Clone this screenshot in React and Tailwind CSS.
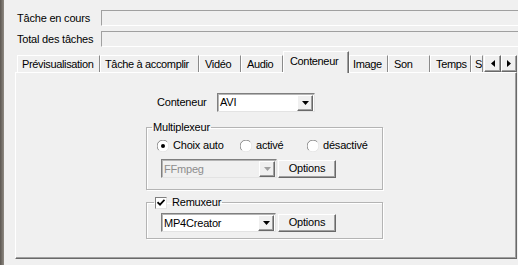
import React from "react";

const raised =
  "bg-[#f0f0f0] border border-t-white border-l-white border-r-[#696969] border-b-[#696969] shadow-[inset_-1px_-1px_0_#a0a0a0]";

function DownArrow({ color = "#000" }) {
  return (
    <svg width="7" height="4" viewBox="0 0 7 4">
      <path d="M0 0H7L3.5 4Z" fill={color} />
    </svg>
  );
}

function Select({ value, width, disabled }) {
  return (
    <div
      className={`flex h-[19px] border border-t-[#7f7f7f] border-l-[#7f7f7f] border-r-[#e3e3e3] border-b-[#e3e3e3] shadow-[inset_1px_1px_0_#b5b5b5] ${
        disabled ? "bg-[#f0f0f0] text-[#8d8d8d]" : "bg-white text-black"
      }`}
      style={{ width }}
    >
      <div className="flex-1 flex items-center pl-[2px] pt-[1px]">{value}</div>
      <div className={`w-[16px] h-[16px] mt-[1px] mr-[1px] flex items-center justify-center ${raised}`}>
        <DownArrow color={disabled ? "#a0a0a0" : "#000"} />
      </div>
    </div>
  );
}

function Button({ children }) {
  return (
    <div className={`w-[58px] h-[18px] flex items-center justify-center ${raised}`}>{children}</div>
  );
}

function Radio({ checked }) {
  return (
    <svg width="12" height="12" viewBox="0 0 12 12" className="shrink-0">
      <circle cx="6" cy="6" r="5.5" fill="#fff" />
      <path d="M10.2 1.8 A5.6 5.6 0 0 0 1.8 10.2" stroke="#8a8a8a" fill="none" />
      <path d="M10.2 1.8 A5.6 5.6 0 0 1 1.8 10.2" stroke="#e6e6e6" fill="none" />
      {checked && <circle cx="6" cy="6" r="2" fill="#000" />}
    </svg>
  );
}

function Tab({ label, w, selected, pl }) {
  if (selected) {
    return (
      <div
        className="relative z-10 h-[22px] shrink-0 bg-[#f0f0f0] border-t border-l border-r border-t-white border-l-white border-r-[#696969] shadow-[inset_-1px_0_0_#a0a0a0] pl-[6px] pt-[3px] whitespace-nowrap overflow-hidden"
        style={{ width: w }}
      >
        {label}
      </div>
    );
  }
  return (
    <div
      className="h-[17px] mb-[1px] shrink-0 bg-[#f0f0f0] border-t border-l border-r border-t-white border-l-white border-r-[#8a8a8a] pt-[2px] whitespace-nowrap overflow-hidden"
      style={{ width: w, paddingLeft: pl }}
    >
      {label}
    </div>
  );
}

export default function App() {
  const tabs = [
    ["Prévisualisation", 83, false, 4],
    ["Tâche à accomplir", 99, false, 4],
    ["Vidéo", 42, false, 5],
    ["Audio", 42, false, 5],
    ["Conteneur", 66, true, 6],
    ["Image", 39, false, 3],
    ["Son", 42, false, 5],
    ["Temps", 41, false, 5],
    ["S", 12, false, 3],
  ];
  return (
    <div className="w-[518px] h-[265px] overflow-hidden bg-[#f0f0f0] flex font-['Liberation_Sans',Arial,sans-serif] text-[11px] leading-[13px] tracking-[-0.2px] text-black">
      <div className="w-[4px] h-full shrink-0 bg-gradient-to-r from-[#5c5751] to-[#8f8a83]" />
      <div className="flex-1 flex flex-col min-w-0">
        <div className="pt-[10px] flex flex-col gap-[5px]">
          <div className="flex h-[16px] items-center">
            <div className="w-[97px] pl-[13px] shrink-0">Tâche en cours</div>
            <div className="flex-1 h-full border-t border-l border-b border-t-[#a0a0a0] border-l-[#a0a0a0] border-b-white" />
          </div>
          <div className="flex h-[16px] items-center">
            <div className="w-[97px] pl-[13px] shrink-0">Total des tâches</div>
            <div className="flex-1 h-full border-t border-l border-b border-t-[#a0a0a0] border-l-[#a0a0a0] border-b-white" />
          </div>
        </div>

        <div className="relative z-10 ml-[11px] mt-[4px] w-[502px] h-[22px] flex items-end tracking-[-0.35px]">
          <div className="flex-1 h-full flex items-end overflow-hidden pl-[2px]">
            {tabs.map(([l, w, s, pl]) => (
              <Tab key={l} label={l} w={w} selected={s} pl={pl} />
            ))}
          </div>
          <div className="flex h-[17px] mb-[1px] shrink-0">
            <div className={`w-[17px] h-full flex items-center justify-center ${raised}`}>
              <svg width="4" height="7" viewBox="0 0 4 7">
                <path d="M4 0V7L0 3.5Z" fill="#000" />
              </svg>
            </div>
            <div className={`w-[16px] h-full flex items-center justify-center ${raised}`}>
              <svg width="4" height="7" viewBox="0 0 4 7">
                <path d="M0 0V7L4 3.5Z" fill="#000" />
              </svg>
            </div>
          </div>
        </div>

        <div className="relative z-0 -mt-[1px] ml-[11px] w-[502px] h-[187px] border border-t-white border-l-white border-r-[#696969] border-b-[#696969] shadow-[inset_-1px_-1px_0_#a0a0a0]">
          <div className="ml-[130px] w-[237px] pt-[20px] flex flex-col">
            <div className="flex items-center h-[18px]">
              <div className="w-[71px] pl-[11px] shrink-0">Conteneur</div>
              <Select value="AVI" width={98} />
            </div>

            <fieldset className="mt-[10px] border border-[#b4b4b4] shadow-[inset_1px_1px_0_#fff,1px_1px_0_#fff] pb-[11px]">
              <legend className="ml-[5px] px-[1px] leading-[13px]">Multiplexeur</legend>
              <div className="mt-[5px] h-[13px] flex items-center pl-[10px]">
                <div className="w-[83px] flex items-center gap-[4px]">
                  <Radio checked />
                  <span>Choix auto</span>
                </div>
                <div className="w-[67px] flex items-center gap-[4px]">
                  <Radio />
                  <span>activé</span>
                </div>
                <div className="flex items-center gap-[4px]">
                  <Radio />
                  <span>désactivé</span>
                </div>
              </div>
              <div className="mt-[7px] flex items-center gap-[1px] pl-[14px]">
                <Select value="FFmpeg" width={116} disabled />
                <Button>Options</Button>
              </div>
            </fieldset>

            <fieldset className="mt-[6px] border border-[#b4b4b4] shadow-[inset_1px_1px_0_#fff,1px_1px_0_#fff] pb-[6px]">
              <legend className="ml-[7px] px-[1px] leading-[13px]">
                <span className="flex items-center gap-[5px]">
                  <span className="w-[12px] h-[12px] bg-white border border-t-[#7f7f7f] border-l-[#7f7f7f] border-r-[#e3e3e3] border-b-[#e3e3e3] flex items-center justify-center">
                    <svg width="8" height="7" viewBox="0 0 8 7">
                      <path d="M0.5 3.2 L3 5.6 L7.5 0.8" stroke="#000" strokeWidth="1.8" fill="none" />
                    </svg>
                  </span>
                  <span>Remuxeur</span>
                </span>
              </legend>
              <div className="mt-[4px] flex items-center gap-[2px] pl-[14px]">
                <Select value="MP4Creator" width={115} />
                <Button>Options</Button>
              </div>
            </fieldset>
          </div>
        </div>
      </div>
    </div>
  );
}
